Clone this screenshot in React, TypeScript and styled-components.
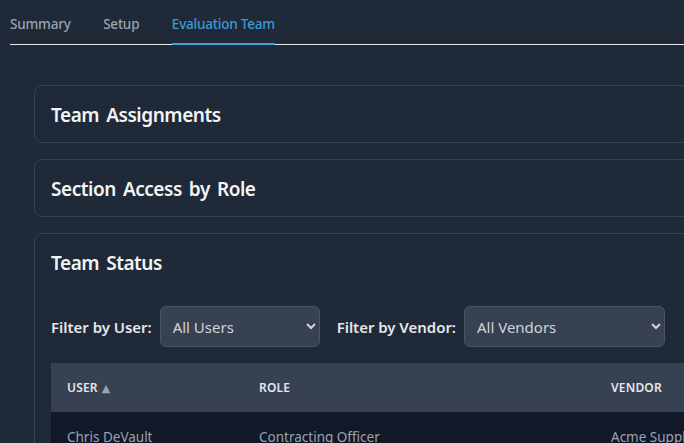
import * as React from "react";
import styled, { createGlobalStyle } from "styled-components";

const Global = createGlobalStyle`
	html, body {
		margin: 0;
		height: 100%;
		background: #1f2937;
		overflow: hidden;
	}
	body {
		font-family: "Noto Sans", "Open Sans", "Liberation Sans", sans-serif;
		color: #f3f4f6;
	}
`;

const Page = styled.div`
	width: 684px;
	height: 443px;
	overflow: hidden;
	padding-left: 10px;
	box-sizing: border-box;
`;

const Tabs = styled.nav`
	display: flex;
	gap: 32.5px;
	height: 45px;
	width: 800px;
	box-sizing: border-box;
	border-bottom: 1px solid #e5e7eb;
`;

const Tab = styled.a<{ $active?: boolean }>`
	height: 45px;
	box-sizing: border-box;
	padding-top: 14px;
	font-size: 13.5px;
	line-height: 20px;
	font-weight: 500;
	letter-spacing: -0.2px;
	color: ${p => (p.$active ? "#3b9bd6" : "#9ca3af")};
	border-bottom: 2px solid ${p => (p.$active ? "#38a3d8" : "transparent")};
`;

const Content = styled.div`
	display: flex;
	flex-direction: column;
	gap: 16px;
	width: 800px;
	margin: 40px 0 0 24px;
`;

const Card = styled.section`
	border: 1px solid #374151;
	border-radius: 8px;
	padding: 17px 16px 15px;
`;

const CardTitle = styled.h2`
	margin: 0;
	font-size: 19px;
	line-height: 24px;
	font-weight: 600;
	letter-spacing: -0.45px;
	word-spacing: 2.5px;
	color: #f3f4f6;
`;

const Filters = styled.div`
	display: flex;
	align-items: center;
	gap: 17px;
	margin-top: 31px;
`;

const Filter = styled.label`
	display: flex;
	align-items: center;
	gap: 8px;
	font-size: 15px;
	font-weight: 600;
	letter-spacing: -0.03px;
	color: #e5e7eb;
`;

const Select = styled.select<{ $width: number }>`
	width: ${p => p.$width}px;
	height: 41px;
	box-sizing: border-box;
	padding: 0 8px;
	background: #374151;
	border: 1px solid #4b5563;
	border-radius: 6px;
	color: #d1d5db;
	font: inherit;
	font-size: 15px;
	font-weight: 400;
`;

const Table = styled.table`
	width: 749px;
	margin-top: 16px;
	border-collapse: collapse;
	table-layout: fixed;
`;

const HeadCell = styled.th<{ $width: number }>`
	width: ${p => p.$width}px;
	height: 49px;
	box-sizing: border-box;
	padding: 0 16px;
	background: #374151;
	text-align: left;
	font-size: 12px;
	font-weight: 600;
	letter-spacing: 0.2px;
	text-transform: uppercase;
	color: #e5e7eb;
`;

const SortMark = styled.span`
	margin-left: 4px;
	font-family: "DejaVu Sans", sans-serif;
	font-size: 11px;
	color: #9ca3af;
`;

const Cell = styled.td`
	height: 50px;
	padding: 0 16px;
	background: #111827;
	font-size: 13.5px;
	color: #9ca3af;
	white-space: nowrap;
`;

export default function App() {
	return (
		<>
			<Global />
			<Page>
				<Tabs>
					<Tab>Summary</Tab>
					<Tab>Setup</Tab>
					<Tab $active>Evaluation Team</Tab>
				</Tabs>
				<Content>
					<Card>
						<CardTitle>Team Assignments</CardTitle>
					</Card>
					<Card>
						<CardTitle>Section Access by Role</CardTitle>
					</Card>
					<Card>
						<CardTitle>Team Status</CardTitle>
						<Filters>
							<Filter>
								Filter by User:
								<Select $width={160}>
									<option>All Users</option>
								</Select>
							</Filter>
							<Filter>
								Filter by Vendor:
								<Select $width={201}>
									<option>All Vendors</option>
								</Select>
							</Filter>
						</Filters>
						<Table>
							<thead>
								<tr>
									<HeadCell $width={192}>
										User<SortMark>▲</SortMark>
									</HeadCell>
									<HeadCell $width={352}>Role</HeadCell>
									<HeadCell $width={205}>Vendor</HeadCell>
								</tr>
							</thead>
							<tbody>
								<tr>
									<Cell>Chris DeVault</Cell>
									<Cell>Contracting Officer</Cell>
									<Cell>Acme Supply</Cell>
								</tr>
							</tbody>
						</Table>
					</Card>
				</Content>
			</Page>
		</>
	);
}
